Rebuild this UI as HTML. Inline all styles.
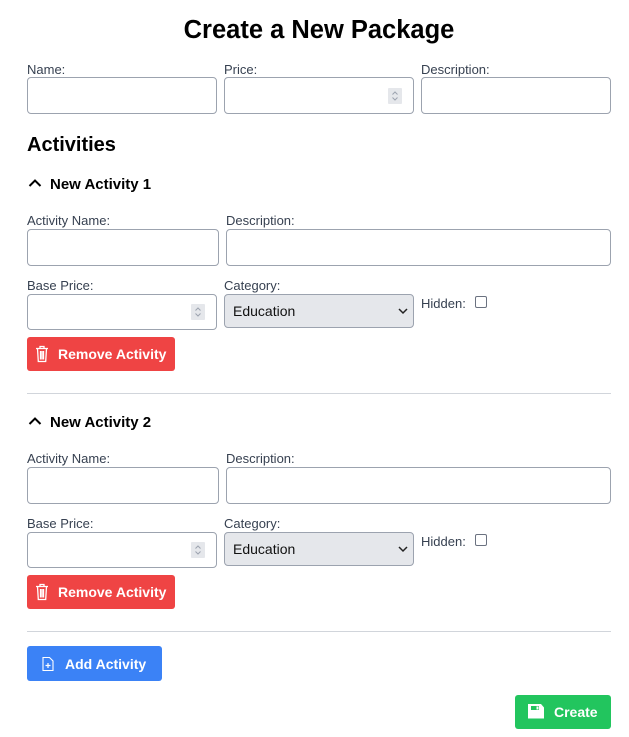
<!DOCTYPE html>
<html><head><meta charset="utf-8"><style>
*{box-sizing:border-box;margin:0;padding:0}
body{width:629px;height:737px;background:#fff;font-family:"Liberation Sans",sans-serif;color:#000;position:relative;overflow:hidden}
.a{position:absolute}
.lbl{position:absolute;font-size:13px;color:#374151;line-height:16px}
.inp{position:absolute;border:1px solid #9ca3af;border-radius:4px;background:#fff}
.spin{position:absolute;right:11px;top:50%;margin-top:-8px;width:14px;height:16px;background:#e5e7eb;border-radius:1px}
.spin svg{display:block}
.sel{position:absolute;border:1px solid #9ca3af;border-radius:4px;background:#e5e7eb;font-size:14px;padding-left:8px;line-height:32px;color:#111}
.btn{position:absolute;border-radius:3px;color:#fff;font-weight:bold;font-size:14px;display:flex;align-items:center}
.h{position:absolute;font-weight:bold;font-size:15px;line-height:18px}
hr{position:absolute;left:27px;width:584px;border:0;border-top:1px solid #d1d5db}
</style></head><body>
<div class="a" style="left:0;width:638px;top:14px;text-align:center;font-weight:bold;font-size:25.5px;line-height:32px">Create a New Package</div>

<div class="lbl" style="left:27px;top:62px">Name:</div>
<div class="lbl" style="left:224px;top:62px">Price:</div>
<div class="lbl" style="left:421px;top:62px">Description:</div>
<div class="inp" style="left:27px;top:77px;width:190px;height:37px"></div>
<div class="inp" style="left:224px;top:77px;width:190px;height:37px"><div class="spin"><svg width="14" height="16" viewBox="0 0 14 16"><path d="M4.5 6.5L7 4l2.5 2.5M4.5 9.5L7 12l2.5-2.5" fill="none" stroke="#9ca3af" stroke-width="1"/></svg></div></div>
<div class="inp" style="left:421px;top:77px;width:190px;height:37px"></div>

<div class="a" style="left:27px;top:132px;font-weight:bold;font-size:20px;line-height:26px">Activities</div>

<!-- activity 1 -->
<svg class="a" style="left:28px;top:178px" width="14" height="10" viewBox="0 0 14 10"><path d="M1.5 8L7 2.5 12.5 8" fill="none" stroke="#000" stroke-width="2"/></svg>
<div class="h" style="left:50px;top:176px">New Activity 1</div>
<div class="lbl" style="left:27px;top:213px">Activity Name:</div>
<div class="lbl" style="left:226px;top:213px">Description:</div>
<div class="inp" style="left:27px;top:229px;width:192px;height:37px"></div>
<div class="inp" style="left:226px;top:229px;width:385px;height:37px"></div>
<div class="lbl" style="left:27px;top:278px">Base Price:</div>
<div class="lbl" style="left:224px;top:278px">Category:</div>
<div class="inp" style="left:27px;top:294px;width:190px;height:36px"><div class="spin"><svg width="14" height="16" viewBox="0 0 14 16"><path d="M4.5 6.5L7 4l2.5 2.5M4.5 9.5L7 12l2.5-2.5" fill="none" stroke="#9ca3af" stroke-width="1"/></svg></div></div>
<div class="sel" style="left:224px;top:294px;width:190px;height:34px">Education<svg class="a" style="right:5px;top:12px" width="10" height="8" viewBox="0 0 10 8"><path d="M1 2l4 4 4-4" fill="none" stroke="#222" stroke-width="1.5"/></svg></div>
<div class="lbl" style="left:421px;top:296px">Hidden:</div>
<div class="a" style="left:475px;top:296px;width:12px;height:12px;border:1px solid #6b7280;border-radius:2px"></div>
<div class="btn" style="left:27px;top:337px;width:148px;height:34px;background:#ef4444;padding-left:8px">
<svg width="14" height="18" viewBox="0 0 14 18"><path d="M1 3.5h12M5 3.5V1.5h4v2M2.5 3.5l.8 13h7.4l.8-13M5.5 6v8.5M7 6v8.5M8.5 6v8.5" fill="none" stroke="#fff" stroke-width="1.3"/></svg>
<span style="margin-left:9px">Remove Activity</span></div>
<hr style="top:393px">

<!-- activity 2 -->
<svg class="a" style="left:28px;top:416px" width="14" height="10" viewBox="0 0 14 10"><path d="M1.5 8L7 2.5 12.5 8" fill="none" stroke="#000" stroke-width="2"/></svg>
<div class="h" style="left:50px;top:414px">New Activity 2</div>
<div class="lbl" style="left:27px;top:451px">Activity Name:</div>
<div class="lbl" style="left:226px;top:451px">Description:</div>
<div class="inp" style="left:27px;top:467px;width:192px;height:37px"></div>
<div class="inp" style="left:226px;top:467px;width:385px;height:37px"></div>
<div class="lbl" style="left:27px;top:516px">Base Price:</div>
<div class="lbl" style="left:224px;top:516px">Category:</div>
<div class="inp" style="left:27px;top:532px;width:190px;height:36px"><div class="spin"><svg width="14" height="16" viewBox="0 0 14 16"><path d="M4.5 6.5L7 4l2.5 2.5M4.5 9.5L7 12l2.5-2.5" fill="none" stroke="#9ca3af" stroke-width="1"/></svg></div></div>
<div class="sel" style="left:224px;top:532px;width:190px;height:34px">Education<svg class="a" style="right:5px;top:12px" width="10" height="8" viewBox="0 0 10 8"><path d="M1 2l4 4 4-4" fill="none" stroke="#222" stroke-width="1.5"/></svg></div>
<div class="lbl" style="left:421px;top:534px">Hidden:</div>
<div class="a" style="left:475px;top:534px;width:12px;height:12px;border:1px solid #6b7280;border-radius:2px"></div>
<div class="btn" style="left:27px;top:575px;width:148px;height:34px;background:#ef4444;padding-left:8px">
<svg width="14" height="18" viewBox="0 0 14 18"><path d="M1 3.5h12M5 3.5V1.5h4v2M2.5 3.5l.8 13h7.4l.8-13M5.5 6v8.5M7 6v8.5M8.5 6v8.5" fill="none" stroke="#fff" stroke-width="1.3"/></svg>
<span style="margin-left:9px">Remove Activity</span></div>
<hr style="top:631px">

<div class="btn" style="left:27px;top:646px;width:135px;height:35px;background:#3b82f6;padding-left:15px">
<svg width="12" height="16" viewBox="0 0 12 16"><path d="M1 1.5h6.5l3.5 3.5v9.5H1z" fill="none" stroke="#fff" stroke-width="1.1"/><path d="M6 7v5M3.5 9.5h5" stroke="#fff" stroke-width="1.2"/></svg>
<span style="margin-left:11px">Add Activity</span></div>

<div class="btn" style="left:515px;top:695px;width:96px;height:34px;background:#22c55e;padding-left:13px">
<svg width="16" height="16" viewBox="0 0 16 16"><path d="M0 1.5v13h16V3.5L13 0H0z" fill="#fff"/><rect x="3" y="2" width="8" height="4" fill="#22c55e"/><rect x="8.5" y="2.5" width="2" height="3" fill="#fff"/></svg>
<span style="margin-left:10px">Create</span></div>
</body></html>
